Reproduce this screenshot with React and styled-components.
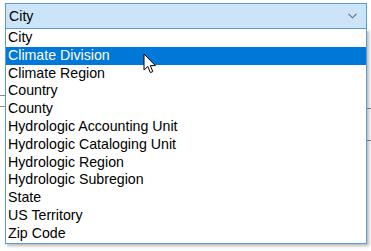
import React from "react";
import styled, { createGlobalStyle } from "styled-components";

const Global = createGlobalStyle`
  html, body { margin: 0; padding: 0; background: #ffffff; }
  body { font-family: "Liberation Sans", Arial, sans-serif; }
`;

const Page = styled.div`
  position: relative;
  width: 371px;
  height: 251px;
  overflow: hidden;
  background: #ffffff;
  padding: 3px 4px 0 5px;
  box-sizing: border-box;
`;

const Combo = styled.div`
  height: 26px;
  box-sizing: border-box;
  border: 1px solid #5a9bdc;
  background: #cce4f7;
  display: flex;
  align-items: center;
  justify-content: space-between;
  padding: 0 9px 0 3px;
  font-size: 14.2px;
  color: #000;
`;

const Chevron = styled.svg`
  width: 9px;
  height: 6px;
  display: block;
`;

/* Form content behind the open dropdown (only its edges peek out) */
const Backdrop = styled.div`
  display: flex;
  justify-content: space-between;
  margin-left: -5px;
  margin-right: -4px;
`;

const EdgeColumn = styled.div`
  display: flex;
  flex-direction: column;
  gap: ${(p) => p.$gap}px;
  padding-top: ${(p) => p.$top}px;
  width: 5px;
`;

const EdgeLine = styled.div`
  height: 1px;
  background: #8a8a8a;
`;

const List = styled.ul`
  position: absolute;
  top: 29px;
  left: 5px;
  width: 362px;
  margin: 0;
  padding: 0;
  list-style: none;
  box-sizing: border-box;
  border: 1px solid #5a9bdc;
  border-top: none;
  background: #ffffff;
  box-shadow: 2px 2px 3px rgba(0, 0, 0, 0.28);
`;

const Item = styled.li`
  height: 17.8px;
  line-height: 17.8px;
  padding-left: 2px;
  font-size: 14.2px;
  white-space: nowrap;
  color: ${(p) => (p.$selected ? "#ffffff" : "#000000")};
  background: ${(p) => (p.$selected ? "#0078d7" : "transparent")};
`;

const Cursor = styled.svg`
  position: absolute;
  left: 143px;
  top: 53px;
  width: 14px;
  height: 22px;
`;

const items = [
  "City",
  "Climate Division",
  "Climate Region",
  "Country",
  "County",
  "Hydrologic Accounting Unit",
  "Hydrologic Cataloging Unit",
  "Hydrologic Region",
  "Hydrologic Subregion",
  "State",
  "US Territory",
  "Zip Code",
];

export default function App() {
  return (
    <Page>
      <Global />
      <Combo>
        <span>City</span>
        <Chevron viewBox="0 0 9 6">
          <path d="M0.5 0.8 L4.5 4.8 L8.5 0.8" fill="none" stroke="#6a6a6a" strokeWidth="1.1" />
        </Chevron>
      </Combo>
      <Backdrop>
        <EdgeColumn $top={66} $gap={10}>
          <EdgeLine />
          <EdgeLine />
        </EdgeColumn>
        <EdgeColumn $top={79} $gap={31}>
          <EdgeLine />
          <EdgeLine />
        </EdgeColumn>
      </Backdrop>
      <List>
        {items.map((t, i) => (
          <Item key={t} $selected={i === 1}>
            {t}
          </Item>
        ))}
      </List>
      <Cursor viewBox="0 0 14 22">
        <path
          d="M1 1 L1 17 L4.8 13.4 L7.4 19.6 L9.8 18.6 L7.3 12.6 L12.4 12.6 Z"
          fill="#ffffff"
          stroke="#000000"
          strokeWidth="1"
          strokeLinejoin="round"
        />
      </Cursor>
    </Page>
  );
}
